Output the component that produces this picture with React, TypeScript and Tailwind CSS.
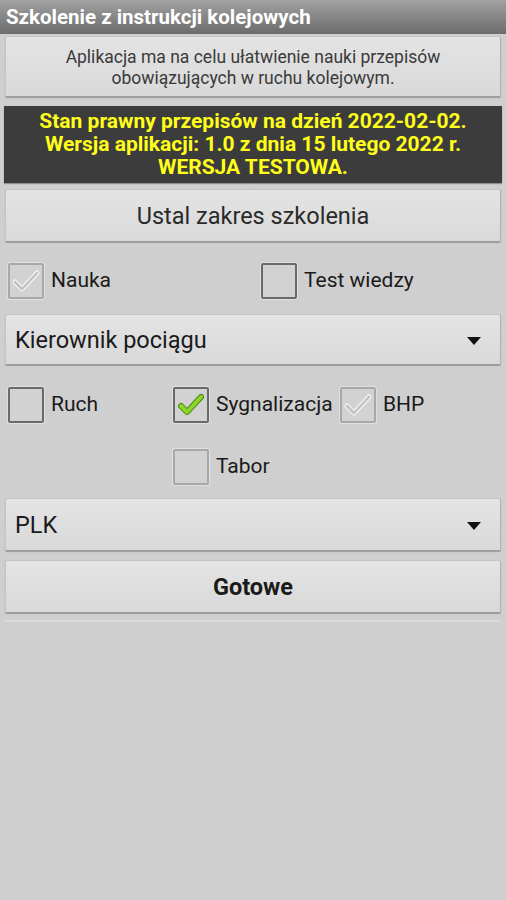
import React from "react";

const btn =
  "bg-gradient-to-b from-[#e4e4e4] to-[#d9d9d9] border border-[#c4c4c4] border-b-[#9c9c9c] border-r-[#b0b0b0] shadow-[0_1px_1px_rgba(0,0,0,0.25)] rounded-[2px]";

function Check({ state, muted }: { state: "off" | "green" | "grey"; muted?: boolean }) {
  return (
    <div
      className={`w-[36px] h-[36px] shrink-0 rounded-[2px] border-2 ${
        muted ? "border-[#a8a8a8]" : "border-[#6a6a6a]"
      } bg-[#d2d2d2] shadow-[0_0_0_1px_rgba(255,255,255,0.35)] flex items-center justify-center`}
    >
      {state === "green" && (
        <svg width="30" height="26" viewBox="0 0 30 26">
          <path d="M5 14 L11 20 L25 5" fill="none" stroke="#4d8a12" strokeWidth="6" strokeLinecap="round" strokeLinejoin="round" />
          <path d="M5 14 L11 20 L25 5" fill="none" stroke="#8bd62a" strokeWidth="4" strokeLinecap="round" strokeLinejoin="round" />
        </svg>
      )}
      {state === "grey" && (
        <svg width="30" height="26" viewBox="0 0 30 26">
          <path d="M4 14 L11 21 L26 5" fill="none" stroke="#f2f2f2" strokeWidth="5" strokeLinecap="round" strokeLinejoin="round" />
          <path d="M4 14 L11 21 L26 5" fill="none" stroke="#c2c2c2" strokeWidth="2.5" strokeLinecap="round" strokeLinejoin="round" />
        </svg>
      )}
    </div>
  );
}

function Arrow() {
  return (
    <svg width="14" height="8" viewBox="0 0 14 8">
      <path d="M0 0 L14 0 L7 8 Z" fill="#111" />
    </svg>
  );
}

export default function App() {
  return (
    <div
      className="w-[506px] h-[900px] bg-[#cfcfcf] flex flex-col text-[#222]"
      style={{ fontFamily: "Roboto, 'Noto Sans', sans-serif" }}
    >
      <div className="h-[34px] bg-gradient-to-b from-[#a2a2a2] to-[#6c6c6c] flex items-center px-[6px] shrink-0">
        <span className="text-white font-bold text-[20.5px] leading-none">Szkolenie z instrukcji kolejowych</span>
      </div>

      <div className={`mx-[5px] mt-[2px] h-[61px] pt-[2px] ${btn} flex flex-col items-center justify-center text-[17.5px] leading-[21px] text-[#3a3a3a]`}>
        <span>Aplikacja ma na celu ułatwienie nauki przepisów</span>
        <span>obowiązujących w ruchu kolejowym.</span>
      </div>

      <div className="mx-[4px] mt-[9px] h-[77px] bg-[#3c3c3c] flex flex-col items-center justify-center text-[#ffff1a] font-bold text-[21px] leading-[23px] shadow-[0_1px_1px_rgba(0,0,0,0.3)]">
        <span>Stan prawny przepisów na dzień 2022-02-02.</span>
        <span>Wersja aplikacji: 1.0 z dnia 15 lutego 2022 r.</span>
        <span>WERSJA TESTOWA.</span>
      </div>

      <div className={`mx-[5px] mt-[6px] h-[53px] pt-[3px] ${btn} flex items-center justify-center text-[23.5px] text-[#2a2a2a]`}>
        Ustal zakres szkolenia
      </div>

      <div className="flex items-center mt-[21px] h-[35px]">
        <div className="flex items-center w-[261px] pl-[8px] gap-[7px]">
          <Check state="grey" muted />
          <span className="text-[21px] text-[#1a1a1a]">Nauka</span>
        </div>
        <div className="flex items-center gap-[7px]">
          <Check state="off" />
          <span className="text-[21px] text-[#1a1a1a]">Test wiedzy</span>
        </div>
      </div>

      <div className={`mx-[5px] mt-[16px] h-[51px] pt-[2px] ${btn} flex items-center justify-between pl-[9px] pr-[19px]`}>
        <span className="text-[23.5px] text-[#1a1a1a]">Kierownik pociągu</span>
        <Arrow />
      </div>

      <div className="flex items-center mt-[22px] h-[35px]">
        <div className="flex items-center w-[173px] pl-[8px] gap-[7px]">
          <Check state="off" />
          <span className="text-[21px] text-[#1a1a1a]">Ruch</span>
        </div>
        <div className="flex items-center w-[167px] gap-[7px]">
          <Check state="green" />
          <span className="text-[21px] text-[#1a1a1a]">Sygnalizacja</span>
        </div>
        <div className="flex items-center gap-[7px]">
          <Check state="grey" muted />
          <span className="text-[21px] text-[#1a1a1a]">BHP</span>
        </div>
      </div>

      <div className="flex items-center mt-[27px] h-[35px] pl-[173px] gap-[7px]">
        <Check state="off" muted />
        <span className="text-[21px] text-[#1a1a1a]">Tabor</span>
      </div>

      <div className={`mx-[5px] mt-[14px] h-[53px] pt-[3px] ${btn} flex items-center justify-between pl-[9px] pr-[19px]`}>
        <span className="text-[23.5px] text-[#1a1a1a]">PLK</span>
        <Arrow />
      </div>

      <div className={`mx-[5px] mt-[9px] h-[53px] pt-[3px] ${btn} flex items-center justify-center font-bold text-[23.5px] text-[#1a1a1a]`}>
        Gotowe
      </div>

      <div className="mx-[5px] mt-[7px] h-[2px] bg-[#dadada]" />
    </div>
  );
}
